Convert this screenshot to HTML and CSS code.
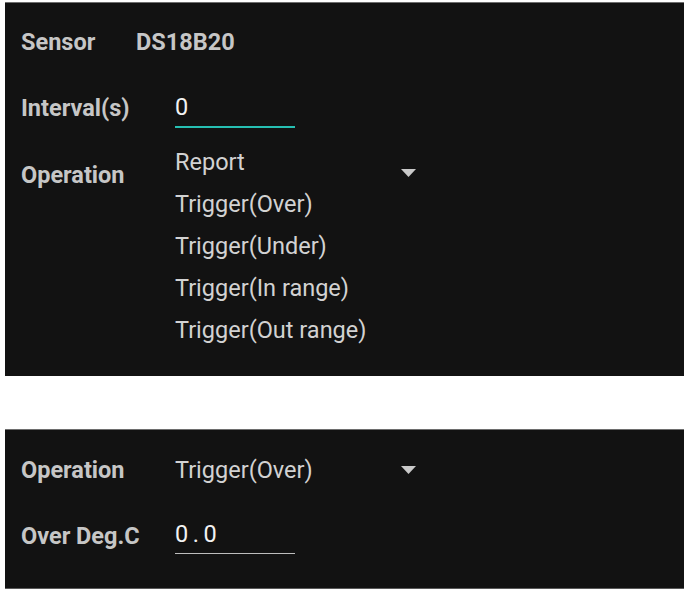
FILE: index.html
```html
<!DOCTYPE html>
<html>
<head>
<meta charset="utf-8">
<link rel="stylesheet" href="styles.css">
</head>
<body>
<section class="panel panel-top">
  <div class="row">
    <span class="label label-short">Sensor</span>
    <span class="label">DS18B20</span>
  </div>
  <div class="row row-gap">
    <span class="label label-col">Interval(s)</span>
    <span class="input input-active">0</span>
  </div>
  <div class="row row-op">
    <span class="label label-col label-op">Operation</span>
    <div class="spinner">
      <ul class="options">
        <li>Report</li>
        <li>Trigger(Over)</li>
        <li>Trigger(Under)</li>
        <li>Trigger(In range)</li>
        <li>Trigger(Out range)</li>
      </ul>
      <svg class="arrow arrow-open" width="15" height="8" viewBox="0 0 15 8"><path d="M0 0 H15 L7.5 8 Z" fill="#c9c9c9"/></svg>
    </div>
  </div>
</section>
<section class="panel panel-bottom">
  <div class="row">
    <span class="label label-col">Operation</span>
    <div class="spinner">
      <span class="selected">Trigger(Over)</span>
      <svg class="arrow arrow-closed" width="15" height="8" viewBox="0 0 15 8"><path d="M0 0 H15 L7.5 8 Z" fill="#c9c9c9"/></svg>
    </div>
  </div>
  <div class="row row-gap">
    <span class="label label-col">Over Deg.C</span>
    <span class="input input-plain">0.0</span>
  </div>
</section>
</body>
</html>
```

FILE: styles.css
```css
html, body {
  margin: 0;
  padding: 0;
  background: #ffffff;
}
body {
  font-family: Roboto, "Noto Sans", sans-serif;
  font-size: 23.5px;
}
.panel {
  background: #121212;
  width: 663px;
  margin-left: 5px;
  padding-left: 16px;
  border-top: 1px solid #6e6e6e;
  box-sizing: content-box;
}
.panel-top {
  margin-top: 2px;
  padding-top: 19px;
  padding-bottom: 25px;
}
.panel-bottom {
  margin-top: 53px;
  padding-top: 20px;
  padding-bottom: 32px;
  border-bottom: 1px solid #5a5a5a;
}
.row {
  display: flex;
  align-items: flex-start;
}
.row-gap {
  margin-top: 26px;
}
.row-op {
  margin-top: 13px;
}
.label {
  font-weight: 700;
  color: #c6c6c6;
  line-height: 40px;
  white-space: nowrap;
}
.label-short {
  width: 115px;
}
.label-col {
  width: 154px;
}
.label-op {
  line-height: 42px;
  margin-top: 13px;
}
.input {
  display: block;
  width: 120px;
  color: #f2f2f2;
}
.input-active {
  line-height: 38px;
  border-bottom: 2px solid #26bfb2;
}
.input-plain {
  line-height: 37px;
  border-bottom: 1px solid #bdbdbd;
  letter-spacing: 4.5px;
}
.spinner {
  display: flex;
  align-items: flex-start;
}
.options {
  list-style: none;
  margin: 0;
  padding: 0;
  width: 226px;
  color: #d2d2d2;
}
.options li {
  line-height: 42px;
}
.selected {
  display: block;
  width: 226px;
  line-height: 40px;
  color: #d2d2d2;
}
.arrow {
  display: block;
}
.arrow-open {
  margin-top: 28px;
}
.arrow-closed {
  margin-top: 16px;
}
```
